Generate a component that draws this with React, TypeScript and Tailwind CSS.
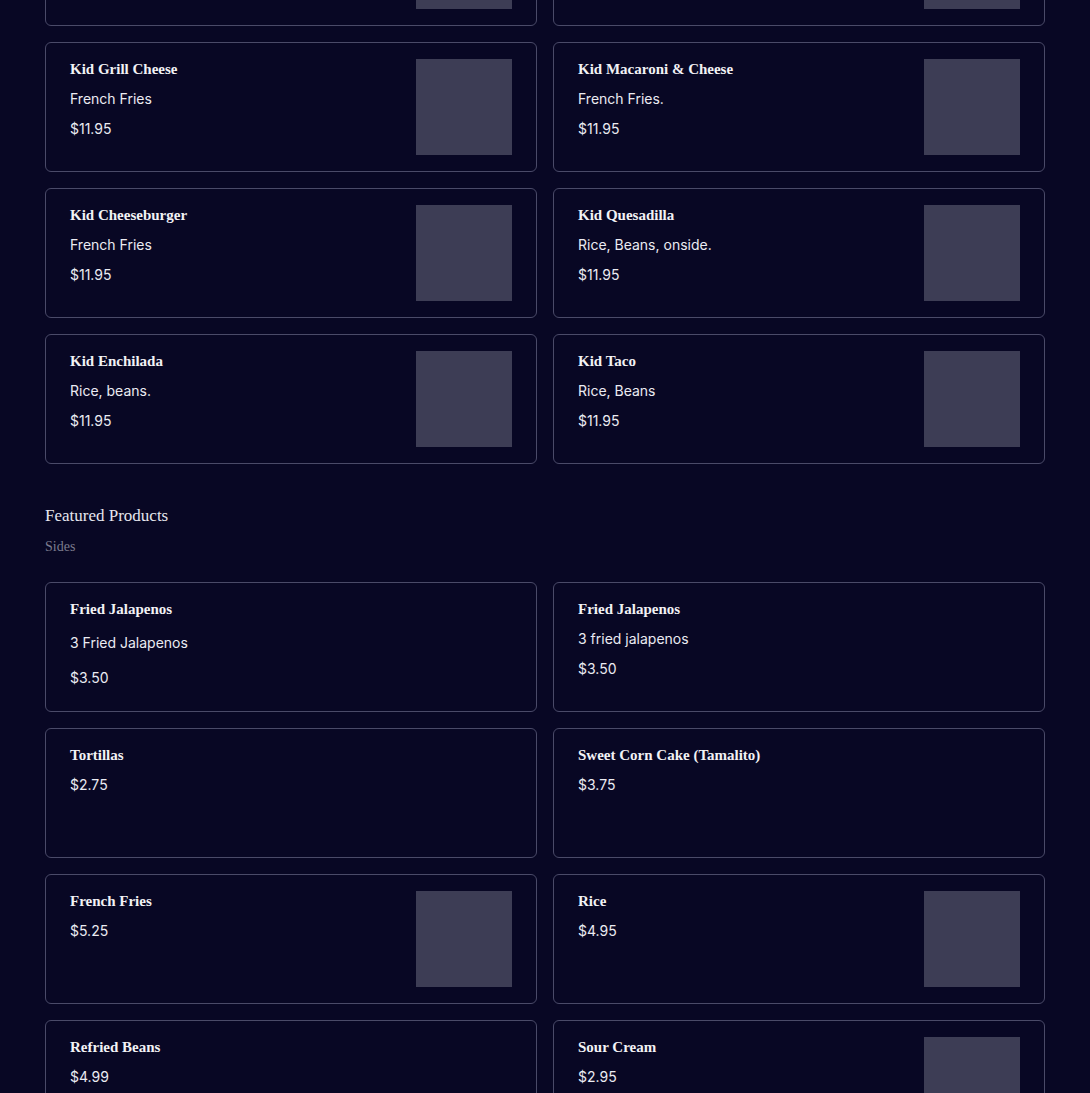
import React from "react";

interface Item {
  name: string;
  desc?: string;
  price: string;
  image?: boolean;
  loose?: boolean;
}

const kids: Item[] = [
  { name: "Kid Chicken Tenders", desc: "French Fries", price: "$11.95", image: true },
  { name: "Kid Burrito", desc: "Rice, Beans", price: "$11.95", image: true },
  { name: "Kid Grill Cheese", desc: "French Fries", price: "$11.95", image: true },
  { name: "Kid Macaroni & Cheese", desc: "French Fries.", price: "$11.95", image: true },
  { name: "Kid Cheeseburger", desc: "French Fries", price: "$11.95", image: true },
  { name: "Kid Quesadilla", desc: "Rice, Beans, onside.", price: "$11.95", image: true },
  { name: "Kid Enchilada", desc: "Rice, beans.", price: "$11.95", image: true },
  { name: "Kid Taco", desc: "Rice, Beans", price: "$11.95", image: true },
];

const sides: Item[] = [
  { name: "Fried Jalapenos", desc: "3 Fried Jalapenos", price: "$3.50", loose: true },
  { name: "Fried Jalapenos", desc: "3 fried jalapenos", price: "$3.50" },
  { name: "Tortillas", price: "$2.75" },
  { name: "Sweet Corn Cake (Tamalito)", price: "$3.75" },
  { name: "French Fries", price: "$5.25", image: true },
  { name: "Rice", price: "$4.95", image: true },
  { name: "Refried Beans", price: "$4.99" },
  { name: "Sour Cream", price: "$2.95", image: true },
];

const Card = ({ item }: { item: Item }) => (
  <div className="flex h-[130px] justify-between rounded-md border border-[#4a4a68] px-6 py-4">
    <div className="flex flex-col">
      <h3 className="font-['Liberation_Serif',serif] text-[15px] font-bold leading-5 text-[#f2f2f5]">
        {item.name}
      </h3>
      {item.desc && (
        <p
          className={`${item.loose ? "mt-[14px]" : "mt-2.5"} font-['Inter',sans-serif] text-[14px] leading-5 text-[#ebebf2]`}
        >
          {item.desc}
        </p>
      )}
      <p
        className={`${item.loose ? "mt-[15px]" : "mt-2.5"} font-['Inter',sans-serif] text-[14px] leading-5 text-[#ebebf2]`}
      >
        {item.price}
      </p>
    </div>
    {item.image && <div className="h-24 w-24 shrink-0 bg-[#3d3d55]" />}
  </div>
);

export default function App() {
  return (
    <div className="min-h-[1093px] overflow-hidden bg-[#080724]">
      <div className="mx-[45px] -mt-[104px]">
        <div className="grid grid-cols-2 gap-4">
          {kids.map((item, i) => (
            <Card key={i} item={item} />
          ))}
        </div>

        <div className="mt-10">
          <h2 className="font-['Liberation_Serif',serif] text-[17px] leading-6 text-[#e6e6ee]">
            Featured Products
          </h2>
          <p className="mt-[9px] font-['Liberation_Serif',serif] text-[14px] leading-5 text-[#7c7c8e]">
            Sides
          </p>
        </div>

        <div className="mt-[25px] grid grid-cols-2 gap-4 pb-10">
          {sides.map((item, i) => (
            <Card key={i} item={item} />
          ))}
        </div>
      </div>
    </div>
  );
}
